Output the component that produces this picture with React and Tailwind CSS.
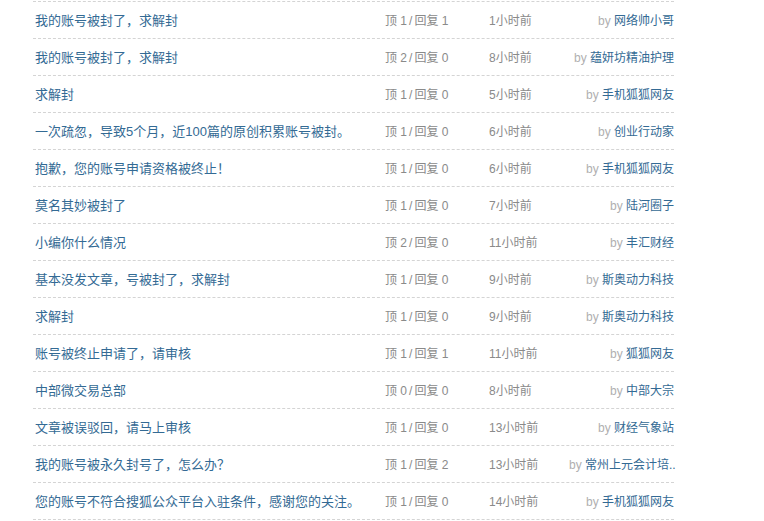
const topics = [
  ["我的账号被封了，求解封", 1, 1, "1小时前", "网络帅小哥"],
  ["我的账号被封了，求解封", 2, 0, "8小时前", "蕴妍坊精油护理"],
  ["求解封", 1, 0, "5小时前", "手机狐狐网友"],
  ["一次疏忽，导致5个月，近100篇的原创积累账号被封。", 1, 0, "6小时前", "创业行动家"],
  ["抱歉，您的账号申请资格被终止！", 1, 0, "6小时前", "手机狐狐网友"],
  ["莫名其妙被封了", 1, 0, "7小时前", "陆河圈子"],
  ["小编你什么情况", 2, 0, "11小时前", "丰汇财经"],
  ["基本没发文章，号被封了，求解封", 1, 0, "9小时前", "斯奥动力科技"],
  ["求解封", 1, 0, "9小时前", "斯奥动力科技"],
  ["账号被终止申请了，请审核", 1, 1, "11小时前", "狐狐网友"],
  ["中部微交易总部", 0, 0, "8小时前", "中部大宗"],
  ["文章被误驳回，请马上审核", 1, 0, "13小时前", "财经气象站"],
  ["我的账号被永久封号了，怎么办？", 1, 2, "13小时前", "常州上元会计培.."],
  ["您的账号不符合搜狐公众平台入驻条件，感谢您的关注。", 1, 0, "14小时前", "手机狐狐网友"],
];

export default function App() {
  return (
    <div className="h-[521px] w-[764px] overflow-hidden bg-white pt-px font-['Liberation_Sans','Noto_Sans_CJK_SC',sans-serif] text-[13px]">
      <ul className="ml-[33px] w-[641px] border-t border-dashed border-[#d4d4d4]">
        {topics.map(([title, up, reply, time, author], i) => (
          <li
            key={i}
            className="flex h-[37px] items-center whitespace-nowrap border-b border-dashed border-[#d4d4d4] pl-[2px] pt-[2px]"
          >
            <a className="w-[350px] truncate text-[#336a94]">{title}</a>
            <span className="w-[104px] text-[12px] text-[#8a8a8a]">
              顶 {up}<span className="mx-[2px]">/</span>回复 {reply}
            </span>
            <span className="w-[80px] text-[12px] text-[#8a8a8a]">{time}</span>
            <span className="min-w-0 flex-1 text-right text-[12px]">
              <span className="text-[12px] text-[#b0b0b0]">by </span>
              <a className="text-[#336a94]">{author}</a>
            </span>
          </li>
        ))}
      </ul>
    </div>
  );
}
